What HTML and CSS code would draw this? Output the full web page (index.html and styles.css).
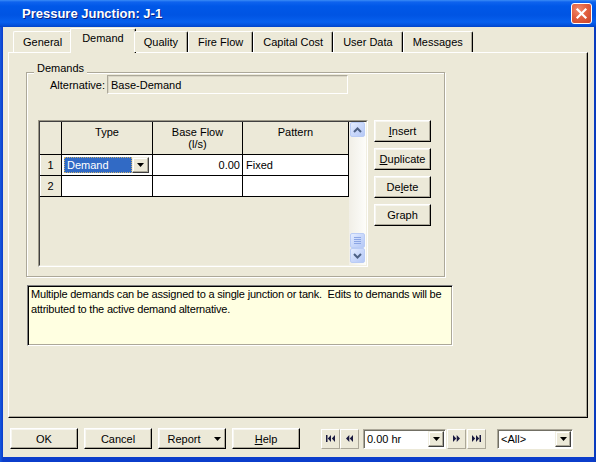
FILE: index.html
```html
<!DOCTYPE html>
<html>
<head>
<meta charset="utf-8">
<title>Pressure Junction: J-1</title>
<link rel="stylesheet" href="styles.css">
</head>
<body>
<div class="window">
  <div class="titlebar">
    <span class="title">Pressure Junction: J-1</span>
    <span class="close"><svg width="13" height="13" viewBox="0 0 13 13"><path d="M2.5 2.5 L10.5 10.5 M10.5 2.5 L2.5 10.5" stroke="#fff" stroke-width="2.2" stroke-linecap="square" fill="none"/></svg></span>
  </div>
  <div class="frame">
    <div class="client">
      <div class="tabs">
        <div class="tab">General</div>
        <div class="tab active">Demand</div>
        <div class="tab">Quality</div>
        <div class="tab">Fire Flow</div>
        <div class="tab">Capital Cost</div>
        <div class="tab">User Data</div>
        <div class="tab">Messages</div>
      </div>
      <div class="panel">
        <div class="group">
          <span class="group-label">Demands</span>
          <div class="alt-row">
            <span class="alt-label">Alternative:</span>
            <div class="alt-field">Base-Demand</div>
          </div>
          <div class="grid-row">
            <div class="grid">
              <div class="grid-inner">
                <div class="grid-main">
                  <div class="grid-table">
                    <div class="hc"></div>
                    <div class="hc">Type</div>
                    <div class="hc">Base Flow<br>(l/s)</div>
                    <div class="hc">Pattern</div>
                    <div class="rh">1</div>
                    <div class="dc type-cell">
                      <div class="cell-combo">
                        <span class="sel">Demand</span>
                        <span class="dd"><svg width="7" height="4" viewBox="0 0 7 4"><path d="M0 0H7L3.5 4Z" fill="#000"/></svg></span>
                      </div>
                    </div>
                    <div class="dc num">0.00</div>
                    <div class="dc txt">Fixed</div>
                    <div class="rh">2</div>
                    <div class="dc"></div>
                    <div class="dc"></div>
                    <div class="dc"></div>
                  </div>
                </div>
                <div class="vscroll">
                  <div class="sb-btn"><svg width="9" height="6" viewBox="0 0 9 6"><path d="M1 5 L4.5 1.5 L8 5" stroke="#4D6185" stroke-width="2" fill="none"/></svg></div>
                  <div class="sb-track"></div>
                  <div class="sb-btn thumb"><svg width="7" height="7" viewBox="0 0 7 7"><path d="M0 0.5H7M0 2.5H7M0 4.5H7M0 6.5H7" stroke="#8CA6E4" stroke-width="1" fill="none"/></svg></div>
                  <div class="sb-btn down"><svg width="9" height="6" viewBox="0 0 9 6"><path d="M1 1 L4.5 4.5 L8 1" stroke="#4D6185" stroke-width="2" fill="none"/></svg></div>
                </div>
              </div>
            </div>
            <div class="side-buttons">
              <button class="btn side"><u>I</u>nsert</button>
              <button class="btn side"><u>D</u>uplicate</button>
              <button class="btn side">De<u>l</u>ete</button>
              <button class="btn side">Graph</button>
            </div>
          </div>
        </div>
        <div class="desc">Multiple demands can be assigned to a single junction or tank.&nbsp; Edits to demands will be attributed to the active demand alternative.</div>
      </div>
      <div class="bottom">
        <div class="main-buttons">
          <button class="btn wide">OK</button>
          <button class="btn wide">Cancel</button>
          <button class="btn wide report"><span>Report</span><svg width="7" height="4" viewBox="0 0 7 4"><path d="M0 0H7L3.5 4Z" fill="#000"/></svg></button>
          <button class="btn wide"><u>H</u>elp</button>
        </div>
        <div class="nav">
          <button class="btn nbtn"><svg width="9" height="7" viewBox="0 0 9 7"><path d="M0 0H1.5V7H0Z M5 0 L1.8 3.5 L5 7Z M9 0 L5.8 3.5 L9 7Z" fill="#1A1A40"/></svg></button>
          <button class="btn nbtn"><svg width="7" height="7" viewBox="0 0 7 7"><path d="M3.3 0 L0 3.5 L3.3 7Z M7 0 L3.7 3.5 L7 7Z" fill="#1A1A40"/></svg></button>
          <div class="combo time">
            <span class="combo-text">0.00 hr</span>
            <span class="dd"><svg width="7" height="4" viewBox="0 0 7 4"><path d="M0 0H7L3.5 4Z" fill="#000"/></svg></span>
          </div>
          <button class="btn nbtn fwd"><svg width="7" height="7" viewBox="0 0 7 7"><path d="M0 0 L3.3 3.5 L0 7Z M3.7 0 L7 3.5 L3.7 7Z" fill="#1A1A40"/></svg></button>
          <button class="btn nbtn last"><svg width="9" height="7" viewBox="0 0 9 7"><path d="M0 0 L3.2 3.5 L0 7Z M4 0 L7.2 3.5 L4 7Z M7.5 0H9V7H7.5Z" fill="#1A1A40"/></svg></button>
          <div class="combo all">
            <span class="combo-text">&lt;All&gt;</span>
            <span class="dd"><svg width="7" height="4" viewBox="0 0 7 4"><path d="M0 0H7L3.5 4Z" fill="#000"/></svg></span>
          </div>
        </div>
      </div>
    </div>
  </div>
</div>
</body>
</html>
```

FILE: styles.css
```css
* {
  box-sizing: border-box;
}

html,
body {
  margin: 0;
  padding: 0;
}

body {
  font-family: "Liberation Sans", Arial, sans-serif;
  font-size: 11px;
  color: #000;
  background: #fff;
}

.window {
  width: 596px;
  height: 462px;
  display: flex;
  flex-direction: column;
  background: #0B3DCB;
}

.titlebar {
  height: 27px;
  flex: none;
  display: flex;
  align-items: center;
  padding: 0 4px 0 22px;
  background: linear-gradient(to bottom,
      #3A8CF6 0px,
      #0E63EE 2px,
      #0058E8 6px,
      #0054E3 15px,
      #0760EE 22px,
      #0352DD 25px,
      #0143C8 27px);
}

.title {
  flex: 1;
  color: #fff;
  font-weight: bold;
  font-size: 13px;
  text-shadow: 1px 1px 0 #0A2080;
}

.close {
  width: 21px;
  height: 21px;
  border: 1px solid #fff;
  border-radius: 3px;
  background: radial-gradient(circle at 35% 30%, #F08A6E 0%, #E2603F 45%, #C8432A 100%);
  display: flex;
  align-items: center;
  justify-content: center;
}

.frame {
  flex: 1;
  display: flex;
  padding: 0 2px 5px 3px;
  background: linear-gradient(to right, #1659DE 0px, #0B3DCB 3px, #0B3DCB 593px, #083AB8 596px);
}

.client {
  flex: 1;
  display: flex;
  flex-direction: column;
  background: #ECE9D8;
}

/* Tabs */
.tabs {
  flex: none;
  height: 25px;
  display: flex;
  align-items: flex-end;
  padding-left: 10px;
  position: relative;
  z-index: 1;
}

.tab {
  height: 21px;
  padding: 3px 9px 0;
  line-height: 14px;
  white-space: nowrap;
  border-top: 1px solid #fff;
  border-left: 1px solid #fff;
  border-right: 1px solid #000;
  box-shadow: inset -1px 0 0 #ACA899;
  border-radius: 2px 2px 0 0;
  background: #ECE9D8;
}

.tab.active {
  height: 25px;
  margin: 0 -2px -1px;
  padding: 2px 11px 0;
}

/* Panel */
.panel {
  flex: none;
  height: 366px;
  margin: 0 6px 0 5px;
  border: 1px solid;
  border-color: #fff #000 #000 #fff;
  box-shadow: inset -1px -1px 0 #ACA899;
  padding: 19px 0 0 17px;
}

.group {
  position: relative;
  width: 419px;
  border: 1px solid #ACA899;
  box-shadow: 1px 1px 0 #fff, inset 1px 1px 0 #fff;
  padding: 2px 0 9px 11px;
}

.group-label {
  position: absolute;
  top: -11px;
  left: 7px;
  padding: 0 3px;
  line-height: 13px;
  background: #ECE9D8;
}

.alt-row {
  display: flex;
  align-items: center;
  margin-left: 12px;
}

.alt-label {
  margin-right: 2px;
}

.alt-field {
  width: 241px;
  height: 19px;
  border: 1px solid;
  border-color: #ACA899 #fff #fff #ACA899;
  box-shadow: inset 1px 1px 0 #DAD6C6;
  padding: 2px 0 0 3px;
  line-height: 14px;
}

/* Grid */
.grid-row {
  display: flex;
  margin-top: 26px;
}

.grid {
  width: 330px;
  height: 147px;
  border: 1px solid;
  border-color: #9C9888 #fff #fff #9C9888;
}

.grid-inner {
  height: 100%;
  display: flex;
  border: 1px solid;
  border-color: #404040 #F1EFE2 #F1EFE2 #404040;
}

.grid-main {
  flex: 1;
  background: #ECE9D8;
}

.grid-table {
  display: grid;
  grid-template-columns: 22px 91px 90px 106px;
  grid-template-rows: 33px 21px 21px;
}

.hc,
.rh,
.dc {
  border-right: 1px solid #000;
  border-bottom: 1px solid #000;
}

.hc {
  background: #ECE9D8;
  text-align: center;
  line-height: 12px;
  padding-top: 4px;
}

.rh {
  background: #ECE9D8;
  text-align: center;
  line-height: 20px;
  box-shadow: inset 1px 0 0 #fff;
}

.dc {
  background: #fff;
  line-height: 20px;
}

.dc.num {
  text-align: right;
  padding-right: 2px;
}

.dc.txt {
  padding-left: 3px;
}

.type-cell {
  padding: 2px 0 0 2px;
}

.cell-combo {
  display: flex;
  width: 85px;
  height: 16px;
}

.sel {
  width: 68px;
  height: 16px;
  background: #316AC5;
  color: #fff;
  line-height: 14px;
  padding-left: 2px;
  border: 1px dotted #C8B070;
}

.dd {
  width: 17px;
  height: 100%;
  display: flex;
  align-items: center;
  justify-content: center;
  background: #ECE9D8;
  border: 1px solid;
  border-color: #F1EFE2 #404040 #404040 #F1EFE2;
  box-shadow: inset -1px -1px 0 #ACA899, inset 1px 1px 0 #fff;
}

.vscroll {
  width: 17px;
  display: flex;
  flex-direction: column;
  align-items: center;
  background: linear-gradient(to right, #F1EFE7, #FDFDFA);
}

.sb-btn {
  width: 15px;
  height: 15px;
  flex: none;
  display: flex;
  align-items: center;
  justify-content: center;
  border: 1px solid #BACCF5;
  border-radius: 2px;
  background: linear-gradient(135deg, #E6EEFF 0%, #CCDAFB 45%, #B6C9F6 100%);
}

.sb-track {
  flex: 1;
}

.sb-btn.down {
  margin-bottom: 2px;
}

/* Buttons */
.btn {
  font-family: inherit;
  font-size: 11px;
  color: #000;
  background: #ECE9D8;
  border: 1px solid;
  border-color: #fff #000 #000 #fff;
  box-shadow: inset -1px -1px 0 #ACA899, inset 1px 1px 0 #F7F6F0;
  padding: 0;
  margin: 0;
  display: flex;
  align-items: center;
  justify-content: center;
}

.side-buttons {
  display: flex;
  flex-direction: column;
  gap: 6px;
  margin-left: 6px;
}

.btn.side {
  width: 57px;
  height: 22px;
}

.desc {
  width: 426px;
  height: 61px;
  margin: 8px 0 0 1px;
  background: #FFFFE1;
  border: 1px solid;
  border-color: #808080 #fff #fff #808080;
  box-shadow: inset 1px 1px 0 #000, inset -1px -1px 0 #ACA899;
  padding: 1px 2px 0 3px;
  line-height: 15px;
  letter-spacing: -0.2px;
}

/* Bottom bar */
.bottom {
  display: flex;
  align-items: center;
  padding: 10px 0 0 7px;
}

.main-buttons {
  display: flex;
  gap: 6px;
}

.btn.wide {
  width: 68px;
  height: 21px;
}

.btn.report {
  gap: 13px;
  padding-left: 4px;
}

.nav {
  display: flex;
  align-items: center;
  margin-left: 21px;
}

.btn.nbtn {
  width: 19px;
  height: 20px;
  border-color: #fff #ACA899 #ACA899 #fff;
  box-shadow: none;
}

.btn.last {
  margin-left: 1px;
}

.combo {
  height: 20px;
  display: flex;
  background: #fff;
  border: 1px solid;
  border-color: #ACA899 #fff #fff #ACA899;
  box-shadow: inset 1px 1px 0 #716F64;
  padding: 1px;
}

.combo.time {
  width: 83px;
  margin: 0 1px 0 4px;
}

.combo.all {
  width: 76px;
  margin-left: 11px;
}

.combo-text {
  flex: 1;
  line-height: 16px;
  padding-left: 2px;
}

.combo .dd {
  width: 16px;
  height: 16px;
}
```
